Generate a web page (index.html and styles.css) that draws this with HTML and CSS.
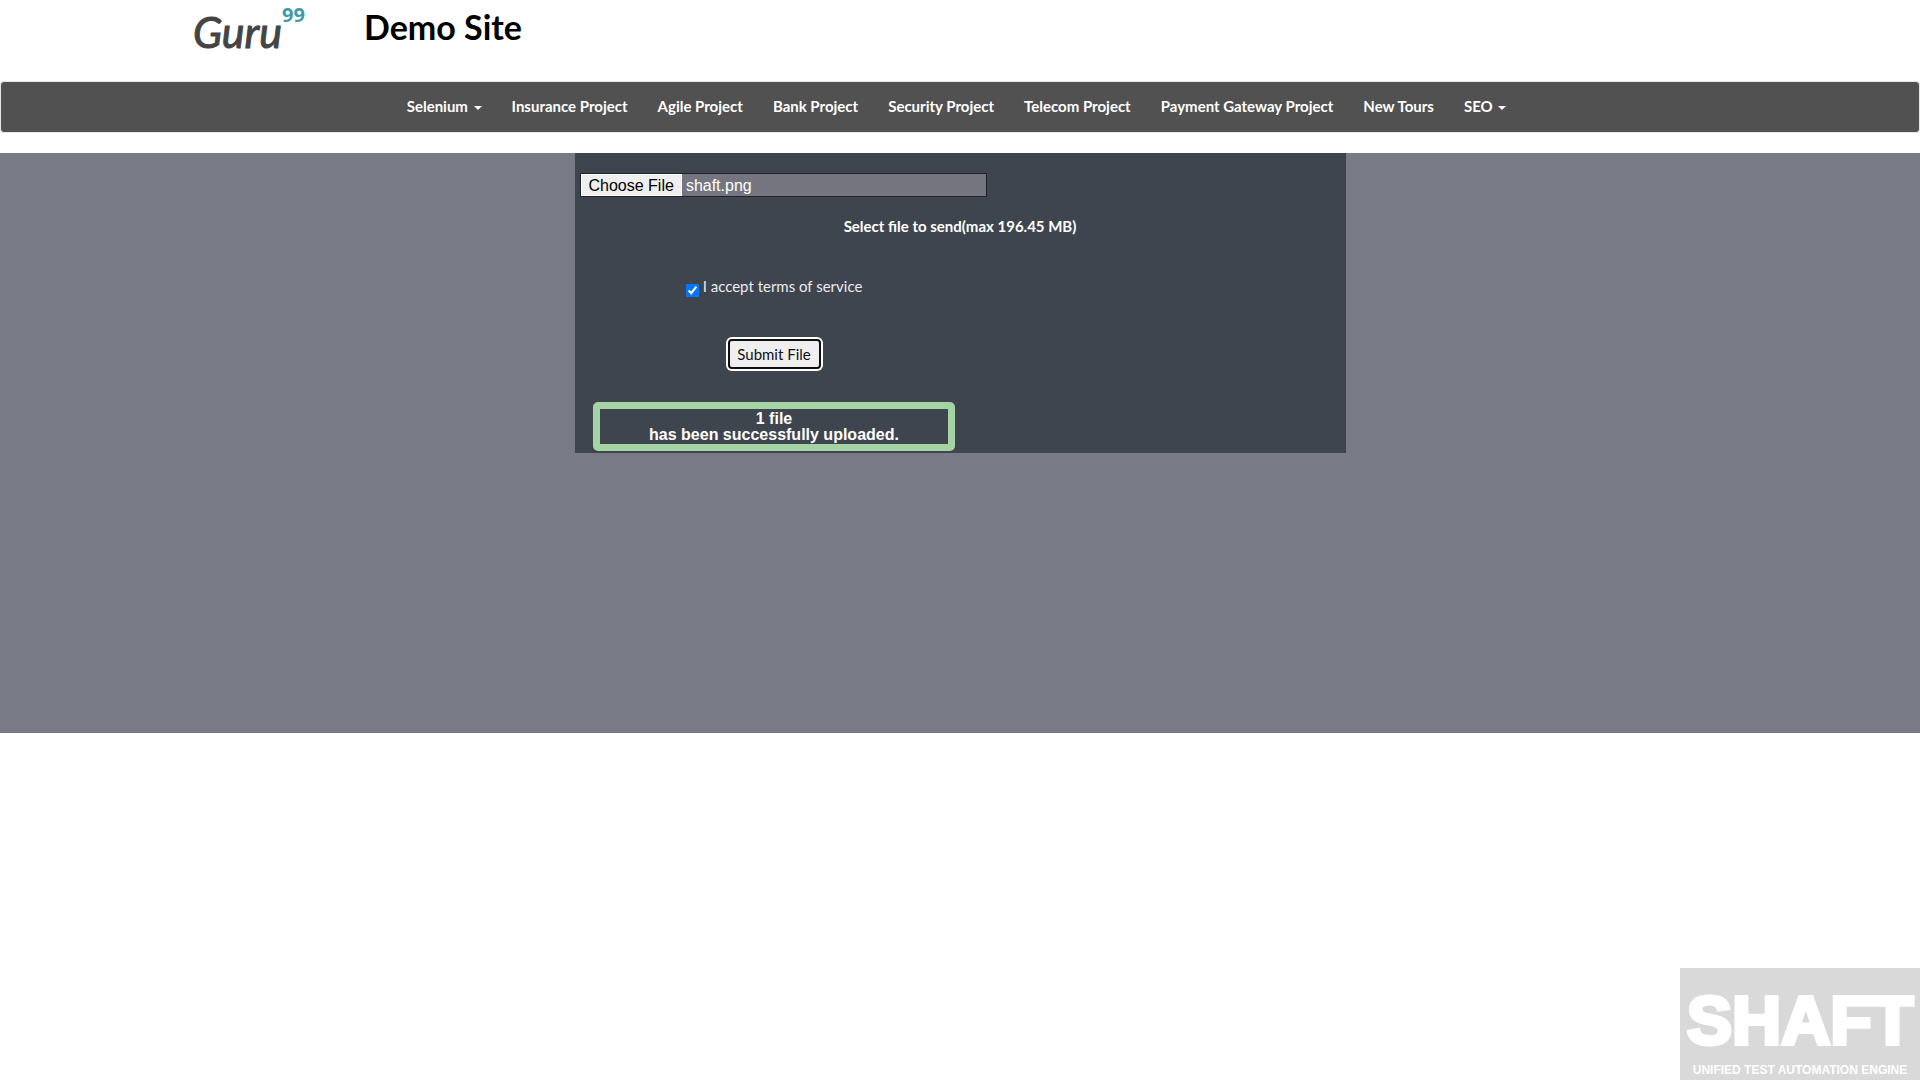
FILE: index.html
```html
<!DOCTYPE html>
<html lang="en">
<head>
<meta charset="utf-8">
<title>Demo Site</title>
<link rel="stylesheet" href="styles.css">
</head>
<body>
<header class="site-header">
  <a class="logo" href="#" aria-label="Guru99"><svg width="116" height="50" viewBox="0 0 116 50"><text class="logo-name" x="1" y="43">Guru</text><text class="logo-number" x="90" y="17">99</text></svg></a>
  <h2 class="site-title">Demo Site</h2>
</header>
<nav class="navbar">
  <ul class="nav-list">
    <li><a href="#">Selenium <b class="caret"></b></a></li>
    <li><a href="#">Insurance Project</a></li>
    <li><a href="#">Agile Project</a></li>
    <li><a href="#">Bank Project</a></li>
    <li><a href="#">Security Project</a></li>
    <li><a href="#">Telecom Project</a></li>
    <li><a href="#">Payment Gateway Project</a></li>
    <li><a href="#">New Tours</a></li>
    <li><a href="#">SEO <b class="caret"></b></a></li>
  </ul>
</nav>
<main class="content">
  <form class="upload">
    <input class="file" id="file" type="file" aria-labelledby="file-label">
    <label class="file-label" id="file-label" for="file">Select file to send(max 196.45 MB)</label>
    <div class="upload-column">
      <div class="terms"><input id="terms" type="checkbox" checked><label for="terms">I accept terms of service</label></div>
      <button class="submit" type="button">Submit File</button>
      <h3 class="result">1 file<br>has been successfully uploaded.</h3>
    </div>
  </form>
</main>
<svg class="watermark" width="240" height="112" viewBox="0 0 240 112" role="img" aria-label="SHAFT Unified Test Automation Engine">
  <rect width="240" height="112" fill="#d9d9d9"/>
  <text class="mark-name" x="120" y="76">SHAFT</text>
  <text class="mark-tagline" x="120" y="106">UNIFIED TEST AUTOMATION ENGINE</text>
</svg>
<script src="script.js"></script>
</body>
</html>
```
FILE: styles.css
```css
* { box-sizing: border-box; }
body {
  margin: 0;
  min-height: 100vh;
  background: #fff;
  color: #fff;
  font: 14px/20px Lato, sans-serif;
}
.site-header {
  display: flex;
  align-items: flex-start;
  gap: 56px;
  height: 81px;
  padding-left: 10%;
}
.logo { margin-top: 5px; }
.logo svg { display: block; overflow: visible; }
.logo-name { font: italic 400 43px Lato, sans-serif; fill: #444; stroke: #444; }
.logo-number { font: 700 20px "Open Sans", sans-serif; fill: #3f9aa8; }
.site-title {
  margin: 7px 0 0;
  color: #000;
  font-size: 34px;
  font-weight: 700;
  line-height: 40px;
}
.navbar {
  margin-bottom: 20px;
  border: 1px solid #e7e7e7;
  border-radius: 4px;
  background: #515151;
}
.nav-list {
  display: flex;
  justify-content: center;
  margin: 0;
  padding: 0 7px 0 0;
  list-style: none;
}
.nav-list a {
  display: block;
  padding: 14px 15px 16px;
  color: #fff;
  font-size: 15px;
  font-weight: 700;
  text-decoration: none;
}
.caret {
  display: inline-block;
  margin-left: 2px;
  vertical-align: middle;
  border-top: 4px solid;
  border-right: 4px solid transparent;
  border-left: 4px solid transparent;
}
.content {
  min-height: 580px;
  background: #787b85;
}
.upload {
  display: flex;
  flex-direction: column;
  max-width: 771px;
  min-height: 300px;
  margin: 0 auto;
  padding: 20px 5px 2px;
  background: #3f454e;
}
.file {
  width: 407px;
  height: 24px;
  border: 1px solid #1d222b;
  background: #757580;
  color: #fff;
  font: 16px/24px "Liberation Sans", sans-serif;
}
.file::file-selector-button {
  height: 22px;
  margin-right: 4px;
  padding: 1px 7px 0;
  border: 1px solid #fff;
  background: #efefef;
  color: #000;
  font: inherit;
  line-height: 20px;
}
.file-label {
  margin-top: 19px;
  font-size: 15px;
  font-weight: 700;
  text-align: center;
}
.upload-column {
  display: flex;
  flex-direction: column;
  align-items: center;
  width: 389px;
}
.terms {
  display: flex;
  gap: 4px;
  margin-top: 40px;
  color: #e9ebed;
  font-size: 15px;
}
.terms input {
  width: 13px;
  height: 13px;
  margin: 8px 0 0;
}
.submit {
  width: 93px;
  height: 30px;
  margin-top: 42px;
  padding: 0;
  border: 2px solid #101010;
  border-radius: 4px;
  background: #efefef;
  color: #111;
  font: 400 15px/20px Lato, sans-serif;
  box-shadow: 0 0 0 2px #fff;
}
.result {
  width: 362px;
  margin: 33px 0 0;
  padding: 2px 0 1px;
  border: 7px solid #a4d3a4;
  border-radius: 5px;
  font: 700 16px/16px "Liberation Sans", sans-serif;
  text-align: center;
}
.watermark {
  position: fixed;
  right: 0;
  bottom: 0;
}
.watermark text {
  fill: #fff;
  stroke: #fff;
  font-family: "Liberation Sans", sans-serif;
  font-weight: 700;
  text-anchor: middle;
}
.mark-name { font-size: 68px; stroke-width: 4px; }
.mark-tagline { font-size: 12px; stroke-width: 0; }
```
FILE: script.js
```js
const upload = new DataTransfer();
upload.items.add(new File([""], "shaft.png", { type: "image/png" }));
document.getElementById("file").files = upload.files;
```
